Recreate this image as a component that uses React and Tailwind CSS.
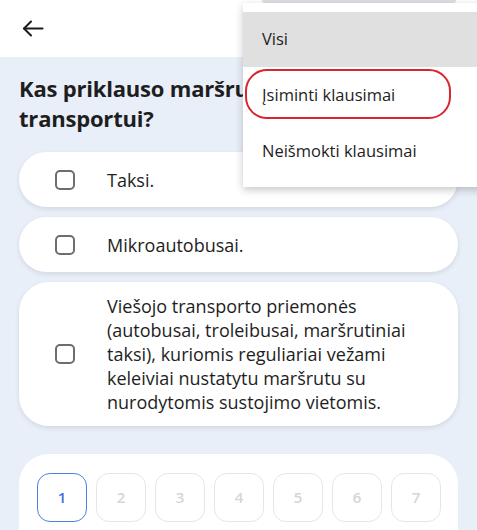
import React from 'react'

const options = [
  { id: 1, lines: ['Taksi.'] },
  { id: 2, lines: ['Mikroautobusai.'] },
  {
    id: 3,
    lines: [
      'Viešojo transporto priemonės',
      '(autobusai, troleibusai, maršrutiniai',
      'taksi), kuriomis reguliariai vežami',
      'keleiviai nustatytu maršrutu su',
      'nurodytomis sustojimo vietomis.'
    ]
  }
]

const pages = [1, 2, 3, 4, 5, 6, 7]

const BackArrow = () => (
  <svg width="22" height="17" viewBox="0 0 22 17" fill="none" stroke="#1c1c1c" strokeWidth="2" strokeLinecap="round" strokeLinejoin="round">
    <path d="M20.5 8.5H2" />
    <path d="M9 1.5L2 8.5L9 15.5" />
  </svg>
)

const App = () => {
  return (
    <div
      className="relative w-[477px] h-[530px] overflow-hidden bg-[#e9eff9] text-[#1e1e1e]"
      style={{ fontFamily: '"Open Sans", "Noto Sans", sans-serif' }}
    >
      {/* Header */}
      <div className="h-[57px] bg-white flex items-center pl-[22px]">
        <BackArrow />
      </div>

      <div className="px-[19px] pt-[16px]">
        <h1 className="text-[22px] leading-[30px] font-bold tracking-[-0.2px]">
          Kas priklauso maršrutiniam
          <br />
          transportui?
        </h1>

        <div className="mt-[19px] flex flex-col gap-[10px]">
          {options.map(opt => (
            <div
              key={opt.id}
              className="min-h-[55px] bg-white rounded-[30px] shadow-[0_2px_5px_rgba(0,0,0,0.10)] flex items-center py-[12px] pl-[36px] pr-[16px]"
            >
              <div className="w-[20px] h-[20px] shrink-0 rounded-[5px] border-2 border-[#6d6d6d]" />
              <p className="ml-[32px] text-[18px] leading-[24px] whitespace-nowrap">
                {opt.lines.map((l, i) => (
                  <React.Fragment key={i}>
                    {i > 0 && <br />}
                    {l}
                  </React.Fragment>
                ))}
              </p>
            </div>
          ))}
        </div>

        {/* Pagination */}
        <div className="mt-[28px] bg-white rounded-t-[30px] pt-[19px] pl-[18px] h-[100px]">
          <div className="flex gap-[9px]">
            {pages.map(p => (
              <div
                key={p}
                className={`w-[50px] h-[49px] rounded-[13px] flex items-center justify-center text-[15px] font-semibold ${
                  p === 1
                    ? 'border-[1.5px] border-[#4d7fe3] text-[#3f6fdc]'
                    : 'border border-[#e6e6e6] text-[#d6d6d6]'
                }`}
              >
                {p}
              </div>
            ))}
          </div>
        </div>
      </div>

      {/* Dropdown menu */}
      <div className="absolute left-[262px] top-0 w-[194px] h-[3px] bg-[#dcdfe4] rounded-b-sm" />
      <div className="absolute left-[243px] top-[3px] w-[250px] bg-white pt-[9px] pb-[8px] shadow-[0_3px_8px_rgba(0,0,0,0.22)]">
        <div className="h-[55px] bg-[#e0e0e0] flex items-center pl-[19px] text-[16.5px]">Visi</div>
        <div className="relative h-[56px] flex items-center pl-[19px] text-[16.5px]">
          Įsiminti klausimai
          <div className="absolute left-[2px] top-[2px] w-[206px] h-[50px] rounded-[22px] border-2 border-[#d8262e]" />
        </div>
        <div className="h-[56px] flex items-center pl-[19px] text-[16.5px]">Neišmokti klausimai</div>
      </div>
    </div>
  )
}

export default App
